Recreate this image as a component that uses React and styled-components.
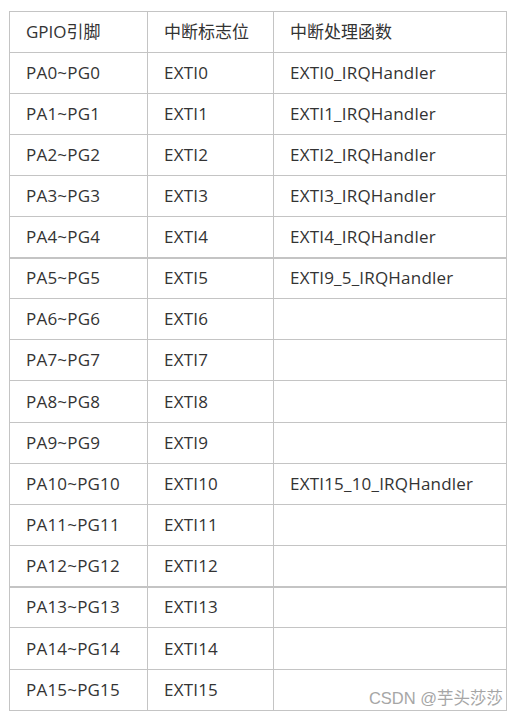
import React from "react";
import styled, { createGlobalStyle } from "styled-components";

const Global = createGlobalStyle`
  html, body { margin: 0; padding: 0; background: #fff; }
  body { font-family: "Open Sans", "Noto Sans CJK SC", sans-serif; }
`;

const Page = styled.div`
  padding: 11px 0 0 9px;
  width: 518px;
  box-sizing: border-box;
`;

const Wrap = styled.div`
  position: relative;
  width: 497px;
`;

const Table = styled.table`
  border-collapse: collapse;
  width: 497px;
  table-layout: fixed;
  color: #333;
  font-size: 17px;
`;

const Row = styled.tr`
  height: ${(p) => (p.$tall ? 42 : 41)}px;
  border-bottom: ${(p) => (p.$thick ? "2px" : "1px")} solid #c4c4c4;
`;

const Cell = styled.td`
  border: 1px solid #c4c4c4;
  border-bottom: inherit;
  padding: 0 0 0 16px;
  box-sizing: border-box;
  white-space: nowrap;
  line-height: 20px;
  letter-spacing: 0.2px;
  vertical-align: middle;
`;

const Head = styled(Cell).attrs({ as: "th" })`
  font-weight: normal;
  text-align: left;
  letter-spacing: 0;
`;

const Watermark = styled.div`
  position: absolute;
  right: 3px;
  bottom: 3px;
  font-family: "Liberation Sans", "Noto Sans CJK SC", sans-serif;
  font-size: 16.5px;
  line-height: 20px;
  color: #a6a6a6;
`;

const rows = [
  ["PA0~PG0", "EXTI0", "EXTI0_IRQHandler"],
  ["PA1~PG1", "EXTI1", "EXTI1_IRQHandler"],
  ["PA2~PG2", "EXTI2", "EXTI2_IRQHandler"],
  ["PA3~PG3", "EXTI3", "EXTI3_IRQHandler"],
  ["PA4~PG4", "EXTI4", "EXTI4_IRQHandler", true],
  ["PA5~PG5", "EXTI5", "EXTI9_5_IRQHandler"],
  ["PA6~PG6", "EXTI6", ""],
  ["PA7~PG7", "EXTI7", ""],
  ["PA8~PG8", "EXTI8", ""],
  ["PA9~PG9", "EXTI9", ""],
  ["PA10~PG10", "EXTI10", "EXTI15_10_IRQHandler"],
  ["PA11~PG11", "EXTI11", ""],
  ["PA12~PG12", "EXTI12", "", true],
  ["PA13~PG13", "EXTI13", ""],
  ["PA14~PG14", "EXTI14", ""],
  ["PA15~PG15", "EXTI15", ""],
];

export default function App() {
  return (
    <Page>
      <Global />
      <Wrap>
        <Table>
          <colgroup>
            <col style={{ width: 138 }} />
            <col style={{ width: 126 }} />
            <col style={{ width: 233 }} />
          </colgroup>
          <thead>
            <Row>
              <Head>GPIO引脚</Head>
              <Head>中断标志位</Head>
              <Head>中断处理函数</Head>
            </Row>
          </thead>
          <tbody>
            {rows.map(([a, b, c, thick], i) => (
              <Row key={a} $thick={thick} $tall={i === 8 || i === 14}>
                <Cell>{a}</Cell>
                <Cell>{b}</Cell>
                <Cell>{c}</Cell>
              </Row>
            ))}
          </tbody>
        </Table>
        <Watermark>CSDN @芋头莎莎</Watermark>
      </Wrap>
    </Page>
  );
}
